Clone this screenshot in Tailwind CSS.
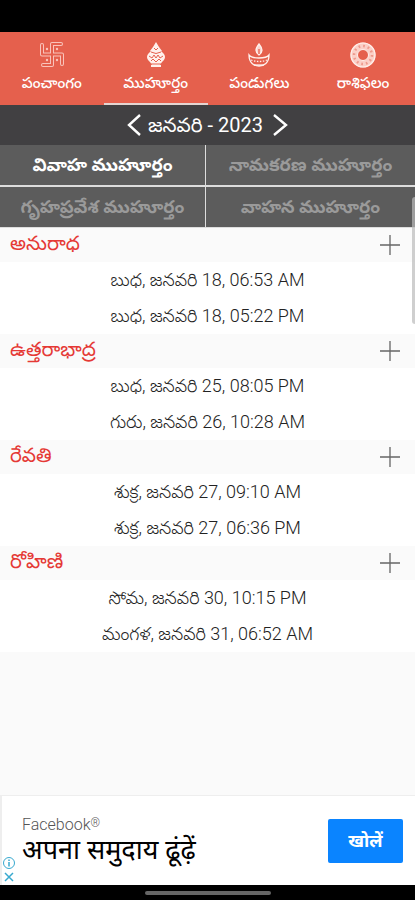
<!DOCTYPE html>
<html lang="te">
<head>
    <meta charset="UTF-8">
    <meta name="viewport" content="width=device-width, initial-scale=1.0">
    <title>ముహూర్తం</title>
    <script src="https://cdn.jsdelivr.net/npm/@tailwindcss/browser@4"></script>
</head>
<body class="relative flex min-h-screen flex-col bg-[#fafafa] font-[Roboto,'Noto_Sans_Telugu','Noto_Sans',sans-serif] text-[#222]">
    <div class="h-8 bg-black"></div>

    <!-- Tabs -->
    <nav class="grid grid-cols-4 bg-[#e5604d] text-center text-[15px] leading-6 font-medium text-white">
        <a href="#panchangam" class="flex h-[73px] flex-col items-center pt-[7px]">
            <svg class="size-8" viewBox="0 0 32 32" fill="none" stroke="#f9c4bb" stroke-linecap="round">
                <path stroke-width="4" d="M16 5V26M6 15.500H26M16 5H25M16 26H7M6 15.500V6M26 15.500V25"/>
                <path stroke="#e5604d" stroke-width="2" d="M16 5V26M6 15.500H26M16 5H25M16 26H7M6 15.500V6M26 15.500V25"/>
                <g fill="#f9c4bb" stroke="none"><circle cx="11" cy="10" r="1.200"/><circle cx="21" cy="10" r="1.200"/><circle cx="11" cy="21" r="1.200"/><circle cx="21" cy="21" r="1.200"/></g>
            </svg>
            <span>పంచాంగం</span>
        </a>
        <a href="#muhurtham" class="flex h-[73px] flex-col items-center border-b-2 border-[#e4d5d2] pt-[7px]">
            <svg class="size-8" viewBox="0 0 32 32" fill="#fff0ec">
                <path d="M16 3L19 8L22 12L20 14H12L10 12L13 8Z"/>
                <path d="M10 13C6 16 6 20 10 23L12 26H20L22 23C26 20 26 16 22 13Z"/>
                <path d="M11 26H21V28H11Z"/>
                <g fill="none" stroke="#e5604d" stroke-width="1"><path d="M11 13Q16 16 21 13M9 17L12 19L14 16L16 19L18 16L20 19L23 17M11 22L13 20L16 23L19 20L21 22M11 25H21M14 9L16 11L18 9"/></g>
            </svg>
            <span>ముహూర్తం</span>
        </a>
        <a href="#festivals" class="flex h-[73px] flex-col items-center pt-[7px]">
            <svg class="size-8" viewBox="0 0 32 32" fill="none" stroke="#fff0ec" stroke-width="1.300">
                <path fill="#fbd5ce" d="M16 5C12 10 12 13 16 16C20 13 20 10 16 5Z"/>
                <path stroke="#e5604d" d="M16 10V15"/>
                <path d="M6 16C6 24 11 27 16 27C21 27 26 24 26 16C23 20 9 20 6 16Z"/>
                <path stroke-dasharray="1.500 1.500" d="M8 21Q16 24 24 21"/>
                <path d="M11 26H21"/>
            </svg>
            <span>పండుగలు</span>
        </a>
        <a href="#rasiphalam" class="flex h-[73px] flex-col items-center pt-[7px]">
            <svg class="size-8" viewBox="0 0 32 32" fill="none">
                <circle cx="16" cy="16" r="9" stroke="#fbd0c8" stroke-width="7"/>
                <circle cx="16" cy="16" r="12" stroke="#fff0ec" stroke-width="1.200"/>
                <circle cx="16" cy="16" r="9" stroke="#ee9a8d" stroke-width="2.500" stroke-dasharray="1.700 3"/>
                <circle cx="16" cy="16" r="5.500" stroke="#fff0ec" stroke-width="1"/>
            </svg>
            <span>రాశిఫలం</span>
        </a>
    </nav>

    <!-- Month switcher -->
    <div class="flex h-10 items-center justify-center bg-[#414042] text-xl text-white">
        <button type="button" aria-label="Previous month" class="mr-1">
            <svg class="h-6 w-5" viewBox="0 0 20 24" fill="none" stroke="currentColor" stroke-width="2.400"><path d="M16 2L5 12L16 22"/></svg>
        </button>
        <h1>జనవరి - 2023</h1>
        <button type="button" aria-label="Next month" class="ml-2">
            <svg class="h-6 w-5" viewBox="0 0 20 24" fill="none" stroke="currentColor" stroke-width="2.400"><path d="M3 2L15 12L3 22"/></svg>
        </button>
    </div>

    <div class="grid grid-cols-[205fr_209fr] gap-x-px gap-y-0.5 border-b border-[#ddd] bg-[#ddd] text-lg font-bold text-[#9a9a9a]">
        <button type="button" class="h-10 bg-[#5c5c5c] text-white">వివాహ ముహూర్తం</button>
        <button type="button" class="h-10 bg-[#5c5c5c]">నామకరణ ముహూర్తం</button>
        <button type="button" class="h-10 bg-[#5c5c5c]">గృహప్రవేశ ముహూర్తం</button>
        <button type="button" class="h-10 bg-[#5c5c5c]">వాహన ముహూర్తం</button>
    </div>

    <main class="grow">
        <section>
            <div class="flex h-[34px] items-center justify-between pr-[15px] pl-2.5">
                <h2 class="pb-1 text-xl leading-6 text-[#e53935]">అనురాధ</h2>
                <button type="button" aria-label="Add అనురాధ"><svg class="size-5" viewBox="0 0 20 20" stroke="#666" stroke-width="1.300"><path d="M10 0V20M0 10H20"/></svg></button>
            </div>
            <ul class="bg-white text-center text-lg leading-9 font-light">
                <li>బుధ, జనవరి 18, 06:53 AM</li>
                <li>బుధ, జనవరి 18, 05:22 PM</li>
            </ul>
        </section>
        <section>
            <div class="flex h-[34px] items-center justify-between pr-[15px] pl-2.5">
                <h2 class="pb-1 text-xl leading-6 text-[#e53935]">ఉత్తరాభాద్ర</h2>
                <button type="button" aria-label="Add ఉత్తరాభాద్ర"><svg class="size-5" viewBox="0 0 20 20" stroke="#666" stroke-width="1.300"><path d="M10 0V20M0 10H20"/></svg></button>
            </div>
            <ul class="bg-white text-center text-lg leading-9 font-light">
                <li>బుధ, జనవరి 25, 08:05 PM</li>
                <li>గురు, జనవరి 26, 10:28 AM</li>
            </ul>
        </section>
        <section>
            <div class="flex h-[34px] items-center justify-between pr-[15px] pl-2.5">
                <h2 class="pb-1 text-xl leading-6 text-[#e53935]">రేవతి</h2>
                <button type="button" aria-label="Add రేవతి"><svg class="size-5" viewBox="0 0 20 20" stroke="#666" stroke-width="1.300"><path d="M10 0V20M0 10H20"/></svg></button>
            </div>
            <ul class="bg-white text-center text-lg leading-9 font-light">
                <li>శుక్ర, జనవరి 27, 09:10 AM</li>
                <li>శుక్ర, జనవరి 27, 06:36 PM</li>
            </ul>
        </section>
        <section>
            <div class="flex h-[34px] items-center justify-between pr-[15px] pl-2.5">
                <h2 class="pb-1 text-xl leading-6 text-[#e53935]">రోహిణి</h2>
                <button type="button" aria-label="Add రోహిణి"><svg class="size-5" viewBox="0 0 20 20" stroke="#666" stroke-width="1.300"><path d="M10 0V20M0 10H20"/></svg></button>
            </div>
            <ul class="bg-white text-center text-lg leading-9 font-light">
                <li>సోమ, జనవరి 30, 10:15 PM</li>
                <li>మంగళ, జనవరి 31, 06:52 AM</li>
            </ul>
        </section>
    </main>

    <!-- Ad banner -->
    <aside class="flex h-[90px] items-center justify-between border-t border-l-2 border-[#eee] bg-white pr-3">
        <div class="flex h-full items-end">
            <div class="flex w-5 flex-col items-start gap-px">
                <a href="#adchoices" aria-label="AdChoices"><svg class="size-3.5" viewBox="0 0 14 14" fill="none" stroke="#38a9cf"><circle cx="7" cy="7" r="5.500"/><path stroke-width="1.500" d="M7 6V10.500M7 3.500V5"/></svg></a>
                <button type="button" aria-label="Close ad"><svg class="size-3.5" viewBox="0 0 14 14" stroke="#38a9cf" stroke-width="1.500"><path d="M3 2L11 10M11 2L3 10"/></svg></button>
            </div>
            <div class="pb-4" lang="hi">
                <p class="text-base leading-6 font-light text-[#555]">Facebook<span class="align-top text-xs leading-5">®</span></p>
                <p class="font-['Noto_Sans_Devanagari','Noto_Sans',sans-serif] text-[27px] leading-8 text-black">अपना समुदाय ढूंढ़ें</p>
            </div>
        </div>
        <button type="button" class="h-11 w-[75px] rounded-xs bg-[#0a84ff] text-lg font-bold text-white" lang="hi">खोलें</button>
    </aside>
    <div class="flex h-[15px] items-center justify-center bg-black">
        <div class="h-1 w-[126px] rounded-full bg-[#666]"></div>
    </div>

    <!-- Edge panel handle -->
    <div class="absolute top-[197px] right-0 h-[127px] w-[3px] rounded-l-sm bg-[#bbb]/70"></div>
</body>
</html>
